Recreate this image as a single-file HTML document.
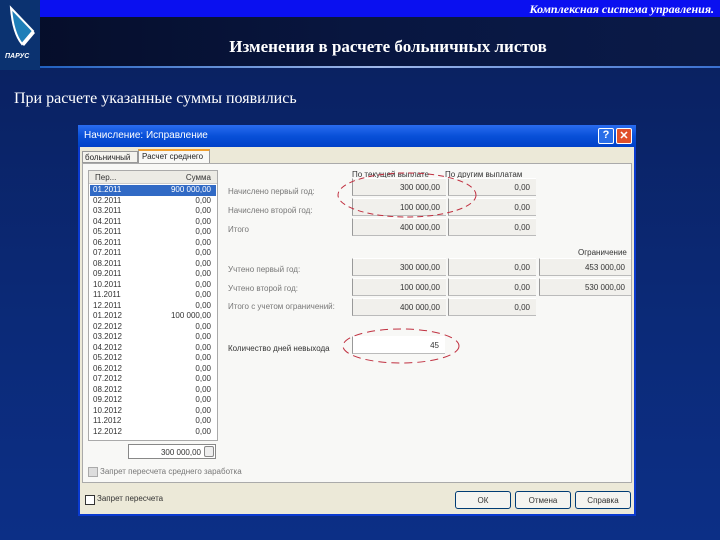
<!DOCTYPE html>
<html><head><meta charset="utf-8"><style>
*{margin:0;padding:0;box-sizing:border-box}
body{width:720px;height:540px;overflow:hidden;position:relative;background:linear-gradient(#0a1f5c,#0b2a78 60%,#0c2f86);font-family:"Liberation Sans",sans-serif}
.a{position:absolute}
.s{font-family:"Liberation Serif",serif;color:#fff}
.t{font-size:8px;color:#777;white-space:nowrap}
.f{position:absolute;background:#f1f0ec;border-left:1px solid #999;border-bottom:1px solid #bbb;border-top:1px solid #fff;font-size:8px;color:#333;text-align:right;padding:4px 6px 0 0;height:18px}
.r{position:absolute;left:93px;width:118px;font-size:8px;color:#333;height:10px;line-height:10px}
.r span{float:right}
</style></head><body>
<div class="a" style="left:0;top:0;width:720px;height:68px;background:linear-gradient(90deg,#050d28,#081640 50%,#0a1a48)"></div>
<div class="a" style="left:40px;top:0;width:680px;height:17px;background:#0a10f0"></div>
<div class="a s" style="right:6px;top:2px;font-size:12px;font-style:italic;font-weight:bold">Комплексная система управления.</div>
<div class="a" style="left:0;top:0;width:40px;height:70px;background:#0b3270"></div>
<svg class="a" style="left:0;top:0" width="40" height="70"><path d="M11 8 Q13 33 22 44 L33 31 Z" fill="#1f7fb8" stroke="#fff" stroke-width="2"/><path d="M22 44 L33 31 L35 33 L24 46Z" fill="#fff"/><text x="5" y="58" font-size="7" fill="#fff" font-style="italic" font-weight="bold" font-family="Liberation Sans">ПАРУС</text></svg>
<div class="a" style="left:40px;top:66px;width:680px;height:2px;background:linear-gradient(90deg,#2060c0,#a0b8e8 50%,#3a70d0)"></div>
<div class="a s" style="left:0;width:776px;text-align:center;top:37px;font-size:17px;font-weight:bold">Изменения в расчете больничных листов</div>
<div class="a s" style="left:14px;top:90px;font-size:16px">При расчете указанные суммы появились</div>

<div class="a" style="left:78px;top:125px;width:558px;height:391px;background:#ece9d8;border:2px solid #0a3ad0;border-top:none"></div>
<div class="a" style="left:78px;top:125px;width:558px;height:22px;background:linear-gradient(#2a6cf0,#0850d8 50%,#0040c8);color:#fff;font-size:10px;padding:5px 0 0 6px">Начисление: Исправление</div>
<div class="a" style="left:598px;top:128px;width:16px;height:16px;background:#2a6ee8;border:1px solid #fff;border-radius:2px;color:#fff;font-size:11px;text-align:center;font-weight:bold">?</div>
<div class="a" style="left:616px;top:128px;width:16px;height:16px;background:#e0502a;border:1px solid #fff;border-radius:2px;color:#fff;font-size:11px;text-align:center;font-weight:bold">✕</div>
<div class="a t" style="left:82px;top:151px;width:56px;height:12px;border:1px solid #999;background:#f4f3ee;color:#222;padding:1px 2px">больничный</div>
<div class="a t" style="left:138px;top:149px;width:72px;height:14px;border:1px solid #999;border-bottom:none;border-top:2px solid #f0a030;background:#f8f8f6;color:#222;padding:1px 3px">Расчет среднего</div>
<div class="a" style="left:82px;top:163px;width:550px;height:320px;background:#f8f8f6;border:1px solid #aaa"></div>
<div class="a" style="left:88px;top:170px;width:130px;height:271px;background:#fff;border:1px solid #aaa"></div>
<div class="a t" style="left:89px;top:171px;width:128px;height:13px;background:#ecebe5;border-bottom:1px solid #ccc;color:#333;padding:2px 6px"><span>Пер...</span><span style="float:right">Сумма</span></div>
<div class="a" style="left:90px;top:185px;width:126px;height:11px;background:#316ac5"></div>
<div id="L"></div>
<div class="a" style="left:128px;top:444px;width:88px;height:15px;background:#fff;border:1px solid #888;font-size:8px;text-align:right;padding:3px 14px 0 0;color:#333">300 000,00</div>
<div class="a" style="left:204px;top:446px;width:10px;height:11px;border:1px solid #888;background:#eee;border-radius:2px"></div>
<div class="a" style="left:88px;top:467px;width:10px;height:10px;border:1px solid #aaa;background:#ddd"></div>
<div class="a t" style="left:100px;top:467px">Запрет пересчета среднего заработка</div>
<div class="a" style="left:85px;top:495px;width:10px;height:10px;border:1px solid #333;background:#fff"></div>
<div class="a t" style="left:97px;top:494px;color:#333">Запрет пересчета</div>
<div class="a t" style="left:455px;top:491px;width:56px;height:18px;border:1px solid #003c74;background:#f4f4f0;border-radius:3px;text-align:center;padding-top:4px;color:#333">ОК</div>
<div class="a t" style="left:515px;top:491px;width:56px;height:18px;border:1px solid #003c74;background:#f4f4f0;border-radius:3px;text-align:center;padding-top:4px;color:#333">Отмена</div>
<div class="a t" style="left:575px;top:491px;width:56px;height:18px;border:1px solid #003c74;background:#f4f4f0;border-radius:3px;text-align:center;padding-top:4px;color:#333">Справка</div>

<div class="a t" style="left:228px;top:187px">Начислено первый год:</div>
<div class="a t" style="left:228px;top:206px">Начислено второй год:</div>
<div class="a t" style="left:228px;top:225px">Итого</div>
<div class="a t" style="left:228px;top:265px">Учтено первый год:</div>
<div class="a t" style="left:228px;top:284px">Учтено второй год:</div>
<div class="a t" style="left:228px;top:302px">Итого с учетом ограничений:</div>
<div class="a t" style="left:228px;top:344px;color:#333">Количество дней невыхода</div>
<div class="a t" style="left:352px;top:170px;color:#333">По текущей выплате</div>
<div class="a t" style="left:445px;top:170px;color:#333">По другим выплатам</div>
<div class="a t" style="left:578px;top:248px;color:#333">Ограничение</div>
<div class="f" style="left:352px;top:178px;width:94px">300 000,00</div>
<div class="f" style="left:448px;top:178px;width:88px">0,00</div>
<div class="f" style="left:352px;top:198px;width:94px">100 000,00</div>
<div class="f" style="left:448px;top:198px;width:88px">0,00</div>
<div class="f" style="left:352px;top:218px;width:94px">400 000,00</div>
<div class="f" style="left:448px;top:218px;width:88px">0,00</div>
<div class="f" style="left:352px;top:258px;width:94px">300 000,00</div>
<div class="f" style="left:448px;top:258px;width:88px">0,00</div>
<div class="f" style="left:539px;top:258px;width:92px">453 000,00</div>
<div class="f" style="left:352px;top:278px;width:94px">100 000,00</div>
<div class="f" style="left:448px;top:278px;width:88px">0,00</div>
<div class="f" style="left:539px;top:278px;width:92px">530 000,00</div>
<div class="f" style="left:352px;top:298px;width:94px">400 000,00</div>
<div class="f" style="left:448px;top:298px;width:88px">0,00</div>
<div class="f" style="left:352px;top:336px;width:93px;background:#fff">45</div>
<svg class="a" style="left:0;top:0" width="720" height="540"><ellipse cx="407" cy="195" rx="69" ry="22" fill="none" stroke="#c03040" stroke-dasharray="6 4"/><ellipse cx="401" cy="346" rx="58" ry="17" fill="none" stroke="#c03040" stroke-dasharray="8 5"/></svg>
<script>
var h='',v=['900 000,00','0,00','0,00','0,00','0,00','0,00','0,00','0,00','0,00','0,00','0,00','0,00','100 000,00','0,00','0,00','0,00','0,00','0,00','0,00','0,00','0,00','0,00','0,00','0,00'];
for(var i=0;i<24;i++){var m=(i%12+1),y=i<12?2011:2012;h+='<div class="r" style="top:'+(185+i*10.5)+'px;'+(i==0?'color:#fff':'')+'">'+(m<10?'0':'')+m+'.'+y+'<span>'+v[i]+'</span></div>';}
document.getElementById('L').outerHTML=h;
</script>
</body></html>
